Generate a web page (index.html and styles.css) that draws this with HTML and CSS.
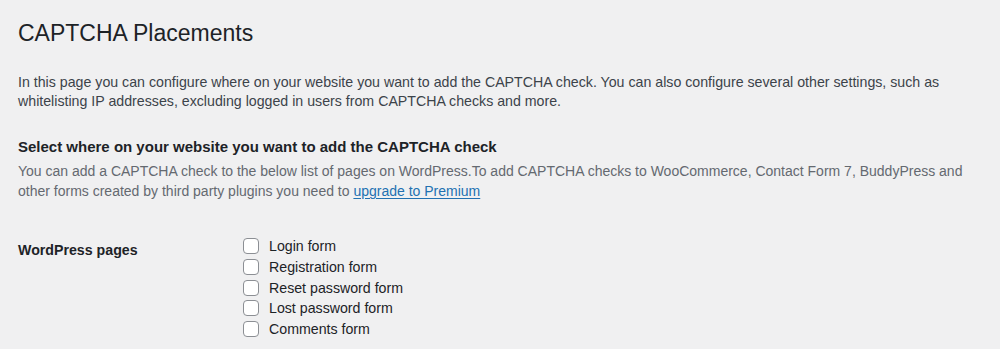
FILE: index.html
```html
<!DOCTYPE html>
<html>
<head>
    <meta charset="UTF-8">
    <title>CAPTCHA Placements</title>
    <link rel="stylesheet" href="styles.css">
</head>
<body>
    <div class="wrap">
        <h1>CAPTCHA Placements</h1>
        <p class="intro">In this page you can configure where on your website you want to add the CAPTCHA check. You can also configure several other settings, such as whitelisting IP addresses, excluding logged in users from CAPTCHA checks and more.</p>

        <h2>Select where on your website you want to add the CAPTCHA check</h2>
        <p class="description">You can add a CAPTCHA check to the below list of pages on WordPress.To add CAPTCHA checks to WooCommerce, Contact Form 7, BuddyPress and other forms created by third party plugins you need to <a href="#">upgrade to Premium</a></p>

        <div class="form-row">
            <div class="row-label">WordPress pages</div>
            <div class="options">
                <label><input type="checkbox"> Login form</label>
                <label><input type="checkbox"> Registration form</label>
                <label><input type="checkbox"> Reset password form</label>
                <label><input type="checkbox"> Lost password form</label>
                <label><input type="checkbox"> Comments form</label>
            </div>
        </div>
    </div>
</body>
</html>
```

FILE: styles.css
```css
body {
    margin: 0;
    background-color: #f0f0f1;
    font-family: "Liberation Sans", Arial, sans-serif;
    font-size: 14.2px;
    color: #3c434a;
}

.wrap {
    padding: 19px 18px 0 18px;
}

h1 {
    font-size: 23px;
    font-weight: 400;
    color: #1d2327;
    margin: 0;
    line-height: 29px;
}

.intro {
    margin: 25px 0 0 0;
    line-height: 19px;
    max-width: 940px;
}

h2 {
    font-size: 15px;
    font-weight: 600;
    color: #1d2327;
    margin: 26px 0 0 0;
    line-height: 20px;
}

.description {
    margin: 4px 0 0 0;
    font-size: 14px;
    color: #646970;
    line-height: 20px;
    max-width: 960px;
}

.description a {
    color: #2271b1;
    text-underline-offset: 2px;
}

.form-row {
    display: flex;
    margin-top: 35px;
}

.row-label {
    width: 225px;
    font-weight: 600;
    color: #1d2327;
    padding-top: 6px;
}

.options {
    display: flex;
    flex-direction: column;
}

.options label {
    display: flex;
    align-items: center;
    height: 20.7px;
    color: #1d2327;
}

.options input {
    appearance: none;
    width: 16px;
    height: 16px;
    margin: 0 10px 0 0;
    border: 1px solid #8c8f94;
    border-radius: 4px;
    background: #fff;
}
```
